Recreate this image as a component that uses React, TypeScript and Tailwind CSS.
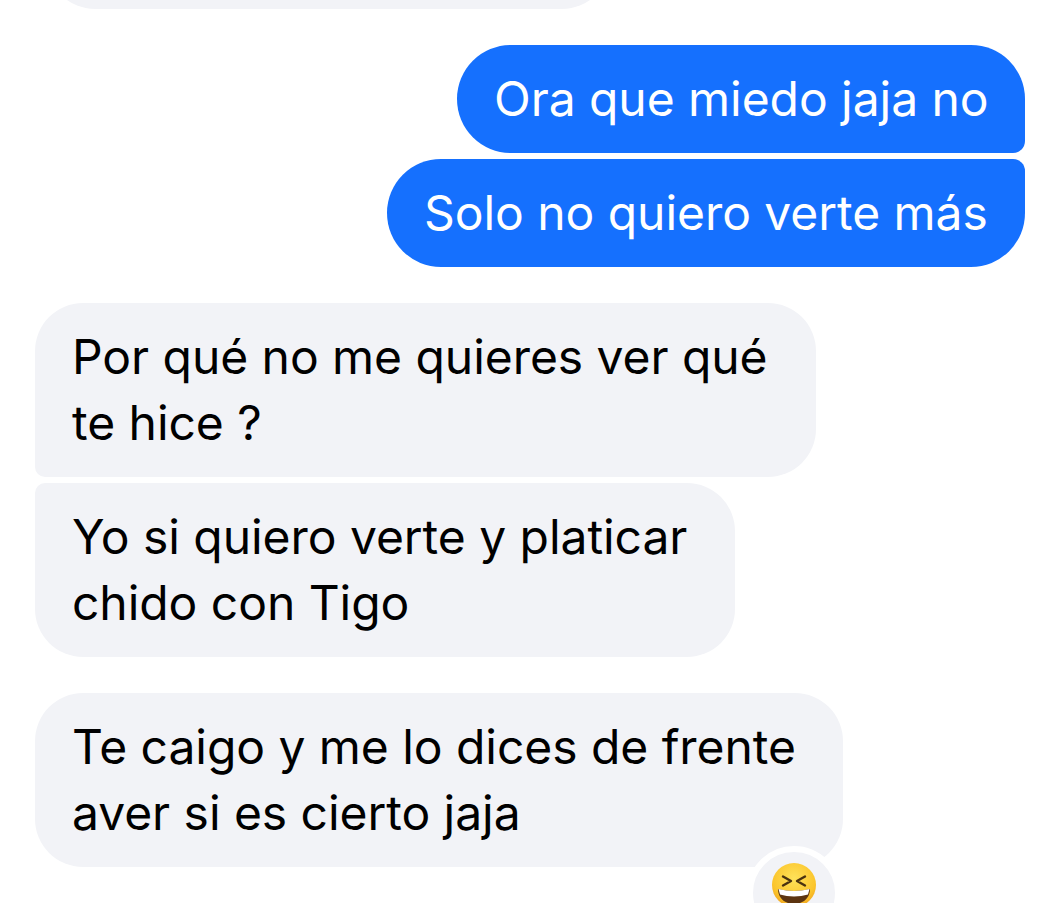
export default function App() {
  const font = "font-['Inter','Liberation_Sans',sans-serif] text-[48px] leading-[66px] tracking-[-0.05px]";
  return (
    <div className={`h-[903px] w-[1048px] overflow-hidden bg-white ${font}`}>
      <div className="-mt-[91px] ml-[47px] h-[100px] w-[563px] rounded-[48px] bg-[#f2f3f7]" />
      <div className="mt-[36px] flex flex-col items-end gap-[6px] pr-[23px] text-white">
        <div className="w-[568px] whitespace-nowrap rounded-[54px] rounded-br-[12px] bg-[#1570fe] px-[37px] py-[21px]">Ora que miedo jaja no</div>
        <div className="w-[638px] whitespace-nowrap rounded-[54px] rounded-tr-[12px] bg-[#1570fe] px-[37px] py-[21px]">Solo no quiero verte más</div>
      </div>
      <div className="mt-[36px] flex flex-col items-start gap-[6px] pl-[35px] text-black">
        <div className="w-[781px] whitespace-nowrap rounded-[48px] rounded-bl-[10px] bg-[#f2f3f7] px-[37px] py-[21px]">Por qué no me quieres ver qué<br />te hice ?</div>
        <div className="w-[700px] whitespace-nowrap rounded-[48px] rounded-tl-[10px] bg-[#f2f3f7] px-[37px] py-[21px]">Yo si quiero verte y platicar<br />chido con Tigo</div>
      </div>
      <div className="mt-[36px] pl-[35px] text-black">
        <div className="relative w-[808px] whitespace-nowrap rounded-[48px] bg-[#f2f3f7] px-[37px] py-[21px]">
          Te caigo y me lo dices de frente<br />aver si es cierto jaja
          <div className="absolute left-[712px] top-[153px] flex h-[94px] w-[94px] items-start justify-center rounded-full border-[6px] border-white bg-[#f2f3f7] pt-[11px]">
            <svg width="44" height="44" viewBox="0 0 44 44" className="shrink-0">
              <defs>
                <radialGradient id="f" cx="50%" cy="35%" r="70%">
                  <stop offset="0%" stopColor="#ffe25a" />
                  <stop offset="70%" stopColor="#fbc52c" />
                  <stop offset="100%" stopColor="#ee9d1c" />
                </radialGradient>
              </defs>
              <circle cx="22" cy="22" r="22" fill="url(#f)" />
              <path d="M11 13.500l8 4.500l-8 4.500M33 13.500l-8 4.500l8 4.500" fill="none" stroke="#4a3210" strokeWidth="2.400" strokeLinecap="round" strokeLinejoin="round" />
              <path d="M6 26c10 2.500 22 2.500 32 0c0 9-7 15-16 15s-16-6-16-15z" fill="#5c3410" />
              <path d="M6.500 26c10 2.500 21 2.500 31 0l-1.500 5.500c-8.500 2.500-19.500 2.500-28 0z" fill="#fff" />
            </svg>
          </div>
        </div>
      </div>
    </div>
  );
}
